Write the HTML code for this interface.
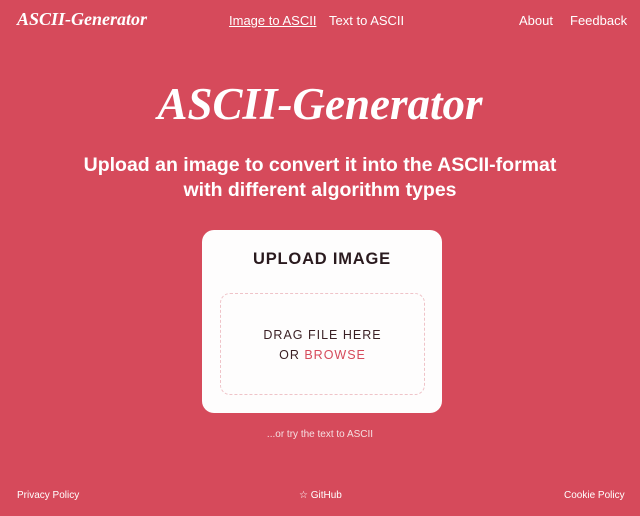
<!DOCTYPE html>
<html><head><meta charset="utf-8"><style>
*{margin:0;padding:0;box-sizing:border-box}
body{width:640px;height:516px;background:#d64a5b;font-family:"Liberation Sans","DejaVu Sans",sans-serif;color:#fff;position:relative;overflow:hidden}
.abs{position:absolute;white-space:nowrap}
.logo{font-family:"Liberation Serif",serif;font-style:italic;font-weight:bold}
.nav{font-size:13px;top:13px}
.box{position:absolute;left:202px;top:230px;width:240px;height:183px;background:#fefdfd;border-radius:12px}
.drop{position:absolute;left:18px;top:63px;width:205px;height:102px;border:1.5px dashed #efc3c8;border-radius:10px;text-align:center;color:#3a1f24;font-size:12.5px;letter-spacing:1px;line-height:20px;padding-top:31px}
.foot{font-size:10px;top:490px}
</style></head><body>
<div class="abs logo" style="left:17px;top:9px;font-size:18px">ASCII-Generator</div>
<div class="abs nav" style="left:229px;text-decoration:underline">Image to ASCII</div>
<div class="abs nav" style="left:329px">Text to ASCII</div>
<div class="abs nav" style="left:519px">About</div>
<div class="abs nav" style="left:570px">Feedback</div>
<div class="abs logo" style="left:0;width:640px;text-align:center;top:78px;font-size:45px">ASCII-Generator</div>
<div class="abs" style="left:0;width:640px;text-align:center;top:153px;font-size:19.5px;font-weight:bold;line-height:25px">Upload an image to convert it into the ASCII-format<br>with different algorithm types</div>
<div class="box">
<div style="position:absolute;left:0;width:240px;top:20px;text-align:center;color:#2a1a1e;font-weight:bold;font-size:16.5px;letter-spacing:0.8px">UPLOAD IMAGE</div>
<div class="drop">DRAG FILE HERE<br>OR <span style="color:#d64a5b">BROWSE</span></div>
</div>
<div class="abs" style="left:0;width:640px;text-align:center;top:429px;font-size:10px;color:#f6dfe2">...or try the text to ASCII</div>
<div class="abs foot" style="left:17px">Privacy Policy</div>
<div class="abs foot" style="left:299px">☆ GitHub</div>
<div class="abs foot" style="left:564px">Cookie Policy</div>
</body></html>
